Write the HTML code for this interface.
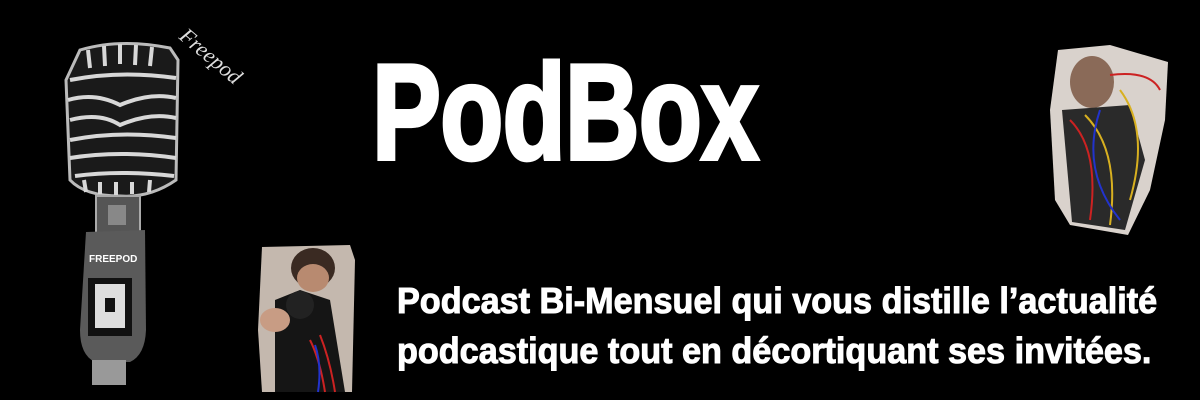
<!DOCTYPE html>
<html><head><meta charset="utf-8"><style>
html,body{margin:0;padding:0;background:#000;width:1200px;height:400px;overflow:hidden;position:relative;font-family:"Liberation Sans",sans-serif;color:#fff}
.t{position:absolute;font-weight:bold;white-space:nowrap;transform-origin:0 0;line-height:1}
</style></head><body>
<div class="t" style="left:372px;top:44px;font-size:136px;transform:scaleX(0.76);letter-spacing:-1px;-webkit-text-stroke:4px #fff">PodBox</div>
<div class="t" style="left:397px;top:283px;font-size:36px;transform:scaleX(0.95);-webkit-text-stroke:1px #fff">Podcast Bi-Mensuel qui vous distille l’actualité</div>
<div class="t" style="left:397px;top:333px;font-size:36px;transform:scaleX(0.95);-webkit-text-stroke:1px #fff">podcastique tout en décortiquant ses invitées.</div>

<svg width="1200" height="400" style="position:absolute;left:0;top:0">
 <g>
  <path d="M80 50 Q120 38 170 48 L178 60 L176 180 Q150 198 120 196 Q85 196 70 180 L66 80 Z" fill="#1a1a1a" stroke="#bbb" stroke-width="3"/>
  <g stroke="#d8d8d8" stroke-width="4" fill="none">
   <path d="M70 80 Q120 70 176 78"/>
   <path d="M68 100 Q95 92 120 105 Q150 92 176 98"/>
   <path d="M70 120 Q100 112 120 125 Q150 112 176 118"/>
   <path d="M70 140 Q120 130 176 138"/>
   <path d="M70 158 Q120 150 176 158"/>
   <path d="M75 176 Q120 170 174 176"/>
   <path d="M88 50 L90 68 M104 46 L105 66 M120 44 L120 64 M136 45 L135 65 M152 47 L150 66"/>
   <path d="M84 180 L86 192 M100 182 L100 194 M116 182 L116 195 M132 182 L132 194 M150 180 L149 192"/>
  </g>
  <rect x="96" y="196" width="44" height="38" fill="#555" stroke="#aaa" stroke-width="2"/>
  <rect x="108" y="205" width="18" height="20" fill="#888"/>
  <path d="M86 232 L145 230 L146 330 Q145 355 130 362 L95 362 Q80 355 80 330 Z" fill="#5a5a5a"/>
  <text x="89" y="262" font-family="Liberation Sans" font-weight="bold" font-size="10" fill="#fff">FREEPOD</text>
  <rect x="88" y="278" width="44" height="58" fill="#111"/>
  <rect x="95" y="284" width="30" height="44" fill="#ddd"/>
  <rect x="105" y="298" width="10" height="14" fill="#111"/>
  <rect x="92" y="360" width="34" height="25" fill="#999"/>
  <text x="178" y="38" font-family="Liberation Serif" font-style="italic" font-size="22" fill="#ddd" transform="rotate(40 178 38)">Freepod</text>
 </g>
 <path d="M262 247 L350 245 L355 260 L352 392 L262 392 L258 330 Z" fill="#c4b8ae"/>
 <ellipse cx="313" cy="268" rx="22" ry="20" fill="#3a2a22"/>
 <ellipse cx="313" cy="278" rx="16" ry="14" fill="#b88a70"/>
 <path d="M275 300 L300 290 L330 300 L345 392 L275 392 Z" fill="#151515"/>
 <ellipse cx="275" cy="320" rx="15" ry="12" fill="#c89c84"/>
 <circle cx="300" cy="305" r="14" fill="#222"/>
 <path d="M310 340 Q320 360 325 392 M320 335 Q330 360 335 392" stroke="#c22" stroke-width="2" fill="none"/>
 <path d="M315 345 Q322 365 318 392" stroke="#23c" stroke-width="2" fill="none"/>
 <path d="M1058 50 L1110 45 L1168 62 L1165 120 L1150 190 L1128 235 L1070 225 L1055 200 L1050 110 Z" fill="#d9d2cc"/>
 <ellipse cx="1092" cy="82" rx="22" ry="26" fill="#8a6a58"/>
 <path d="M1062 110 L1130 105 L1145 160 L1125 230 L1072 222 Z" fill="#2a2a2a"/>
 <g stroke-width="2" fill="none">
  <path d="M1070 120 Q1100 150 1090 220" stroke="#c22"/>
  <path d="M1085 115 Q1120 150 1110 225" stroke="#d8b020"/>
  <path d="M1100 110 Q1080 170 1120 220" stroke="#23c"/>
  <path d="M1120 90 Q1150 130 1130 200" stroke="#d8b020"/>
  <path d="M1110 75 Q1150 70 1160 90" stroke="#c22"/>
 </g>
</svg>
</body></html>
